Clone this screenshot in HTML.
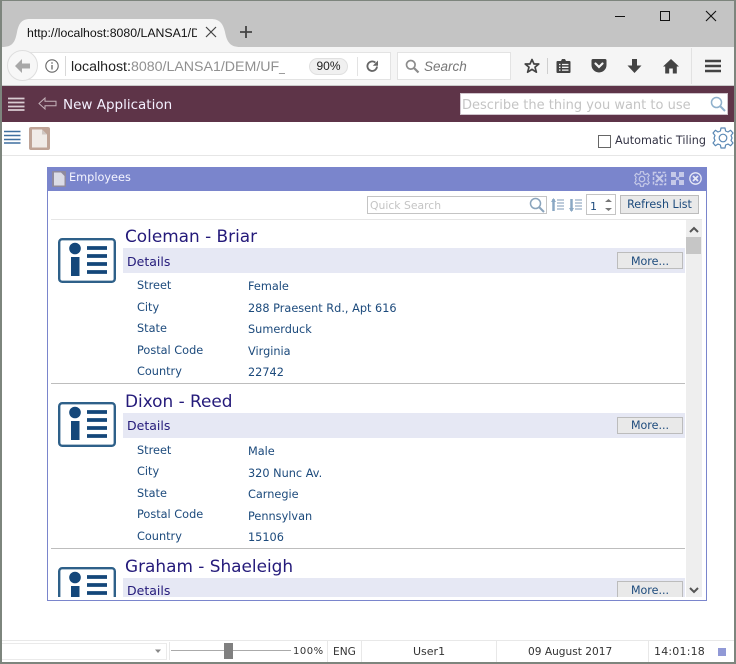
<!DOCTYPE html>
<html><head><meta charset="utf-8"><style>
html,body{margin:0;padding:0;background:#fff}
#p{position:relative;width:736px;height:664px;overflow:hidden;background:#fff;font-family:"DejaVu Sans",Verdana,sans-serif}
#p div,#p span.t{position:absolute;white-space:nowrap}
.t{position:absolute;white-space:nowrap;line-height:16px}
svg{position:absolute;overflow:visible}
.lb,.vl{font-size:11.300px;color:#1c4a7c;line-height:14px;margin-top:1px}
.btn{background:#e9e9e9;border:1px solid #bcbcbc;box-sizing:border-box;text-align:center;color:#1c4a7c;font-size:11.100px;line-height:18px}
.ti{font-size:16.900px;line-height:22px;color:#241a7a}
.de{font-size:12.500px;line-height:16px;color:#241a7a;margin-top:1px}
.st{font-size:10.600px;line-height:14px;color:#333;margin-top:1px}
</style></head><body><div id="p">

<!-- browser chrome -->
<div style="left:0;top:0;width:736px;height:47px;background:#c4c4c4"></div>
<svg style="left:0;top:19px" width="240" height="28"><path d="M2 28C12 28 15 24 17 13C19 3 23 0 30 0H211C219 0 223 4 225 13C227 24 231 28 240 28Z" fill="#f5f5f5"/></svg>
<div style="left:27px;top:24px;width:170px;height:18px;overflow:hidden;font:12.300px/18px 'Liberation Sans',sans-serif;color:#111">http://localhost:8080/LANSA1/DEM/UF_Exec</div>
<svg style="left:205px;top:26px" width="12" height="12"><path d="M1 1L11 11M11 1L1 11" stroke="#444" stroke-width="1.2"/></svg>
<svg style="left:240px;top:26px" width="12" height="12"><path d="M6 0V12M0 6H12" stroke="#444" stroke-width="1.8"/></svg>
<svg style="left:615px;top:10px" width="110" height="14"><path d="M0 6.5H10" stroke="#111" stroke-width="1"/><rect x="45.5" y="1.5" width="9" height="9" fill="none" stroke="#111" stroke-width="1"/><path d="M91 1L101 11M101 1L91 11" stroke="#111" stroke-width="1.1"/></svg>

<div style="left:0;top:47px;width:736px;height:38px;background:#f5f5f5"></div>
<div style="left:0;top:85px;width:736px;height:1px;background:#c9c9c9"></div>
<div style="left:22px;top:52px;width:369px;height:28px;background:#fff;border:1px solid #e3e3e3;box-sizing:border-box"></div>
<div style="left:7px;top:50px;width:31px;height:31px;border-radius:50%;background:#f7f7f7;border:1px solid #dedede;box-sizing:border-box"></div>
<svg style="left:14px;top:58px" width="17" height="16"><path d="M8 1L1 8L8 15V10.5H16V5.5H8Z" fill="#a8a8a8"/></svg>
<svg style="left:45px;top:59px" width="14" height="14"><circle cx="7" cy="7" r="6.2" fill="none" stroke="#666" stroke-width="1.1"/><path d="M7 6V10.5M7 3.2V4.8" stroke="#666" stroke-width="1.3"/></svg>
<div style="left:65px;top:56px;width:1px;height:20px;background:#d8d8d8"></div>
<div style="left:71px;top:58px;width:214px;height:18px;overflow:hidden;font:14.200px/18px 'Liberation Sans',sans-serif;color:#909090"><span style="color:#222">localhost:</span>8080/LANSA1/DEM/UF_Exec.jsp</div>
<div style="left:309px;top:58px;width:39px;height:17px;border-radius:9px;background:#f0f0f0;border:1px solid #e0e0e0;box-sizing:border-box;text-align:center;font:12px/15px 'Liberation Sans',sans-serif;color:#222">90%</div>
<div style="left:357px;top:57px;width:1px;height:19px;background:#e3e3e3"></div>
<svg style="left:366px;top:60px" width="13" height="13"><path d="M11 6.5A4.8 4.8 0 1 1 9.4 2.6" fill="none" stroke="#666" stroke-width="1.8"/><path d="M12 0.5V5.8H6.8Z" fill="#666"/></svg>
<div style="left:397px;top:52px;width:114px;height:28px;background:#fff;border:1px solid #e3e3e3;box-sizing:border-box"></div>
<svg style="left:405px;top:59px" width="15" height="15"><circle cx="5.8" cy="5.8" r="4.3" fill="none" stroke="#8c8c8c" stroke-width="1.7"/><path d="M9 9L13.5 13.5" stroke="#8c8c8c" stroke-width="2.2"/></svg>
<div style="left:424px;top:58px;font:italic 13.500px/18px 'Liberation Sans',sans-serif;color:#777">Search</div>
<svg style="left:524px;top:58px" width="16" height="16"><path d="M8 1.5L10 6H14.8L11 9.2L12.4 14.2L8 11.4L3.6 14.2L5 9.2L1.2 6H6Z" fill="none" stroke="#444" stroke-width="1.7" stroke-linejoin="round"/></svg>
<div style="left:547px;top:58px;width:1px;height:16px;background:#cfcfcf"></div>
<svg style="left:556px;top:58px" width="15" height="16"><path d="M1.5 3H5L6 1H9L10 3H13.5A1 1 0 0 1 14.5 4V14A1 1 0 0 1 13.500 15H1.500A1 1 0 0 1 .5 14V4A1 1 0 0 1 1.500 3Z" fill="#444"/><path d="M3 6.500H4.500M6 6.500H12.500M3 9.300H4.500M6 9.300H12.500M3 12.100H4.500M6 12.100H12.500" stroke="#f5f5f5" stroke-width="1.300"/></svg>
<svg style="left:591px;top:58px" width="16" height="15"><path d="M2 1H14A1.500 1.500 0 0 1 15.500 2.500V7A7.500 7.500 0 0 1 .5 7V2.500A1.500 1.500 0 0 1 2 1Z" fill="#444"/><path d="M4.500 5.500L8 9L11.500 5.500" fill="none" stroke="#f5f5f5" stroke-width="2.200" stroke-linecap="round"/></svg>
<svg style="left:627px;top:59px" width="15" height="15"><path d="M5 0H10V6.500H14.500L7.500 14L.5 6.500H5Z" fill="#444"/></svg>
<svg style="left:663px;top:59px" width="16" height="15"><path d="M8 0L16 7.500H13.800V14.500H9.800V9.500H6.200V14.500H2.200V7.500H0Z" fill="#444"/></svg>
<div style="left:691px;top:48px;width:1px;height:36px;background:#e2e2e2"></div>
<svg style="left:705px;top:59px" width="16" height="14"><path d="M0 2H16M0 7H16M0 12H16" stroke="#444" stroke-width="2.600"/></svg>

<!-- app header -->
<div style="left:0;top:86px;width:736px;height:36px;background:#5e3448"></div>
<svg style="left:8px;top:97px" width="17" height="14"><path d="M0 1.500H16.500M0 5.500H16.500M0 9.500H16.500M0 13H16.500" stroke="#d9ccd2" stroke-width="1.800"/></svg>
<svg style="left:38px;top:97px" width="19" height="14"><path d="M7 1L1 6.500L7 12V8.800H18V4.200H7Z" fill="none" stroke="#c5b3bb" stroke-width="1"/></svg>
<div style="left:63px;top:96px;font-size:13.500px;line-height:18px;color:#f4f0ff">New Application</div>
<div style="left:460px;top:93px;width:268px;height:22px;background:#fff;border:1px solid #cfc4cc;box-sizing:border-box"></div>
<div style="left:462px;top:97px;font-size:13px;line-height:17px;color:#c4c4c4">Describe the thing you want to use</div>
<svg style="left:710px;top:96px" width="17" height="16"><circle cx="6.500" cy="6.500" r="5" fill="none" stroke="#8fb0cc" stroke-width="1.500"/><path d="M10 10L15 15" stroke="#8fb0cc" stroke-width="2"/></svg>

<!-- secondary toolbar -->
<svg style="left:4px;top:130px" width="18" height="16"><path d="M0 1.500H16.500M0 5.500H16.500M0 9.500H16.500M0 13H16.500" stroke="#3f6f9f" stroke-width="1.600"/></svg>
<svg style="left:29px;top:127px" width="22" height="23"><rect x="0" y="0" width="21" height="23" rx="2" fill="#bfa497"/><path d="M3 2.500H13L18 7.500V20.500H3Z" fill="#f0ebe8"/><path d="M13 2.500V7.500H18Z" fill="#cfc6c2"/></svg>
<div style="left:1px;top:155px;width:734px;height:1px;background:#e6e6e6"></div>
<div style="left:598px;top:135px;width:11px;height:11px;border:1px solid #666;box-sizing:content-box"></div>
<div style="left:615px;top:133px;font-size:11.200px;line-height:16px;color:#334">Automatic Tiling</div>
<svg style="left:712px;top:127px" width="22" height="22" viewBox="0 0 22 22"><path d="M9 1H13L13.600 4L16 5L18.600 3.300L21 6L19 8.500L20 11L19 13.500L21 16L18.600 18.700L16 17L13.600 18L13 21H9L8.400 18L6 17L3.400 18.700L1 16L3 13.500L2 11L3 8.500L1 6L3.400 3.300L6 5L8.400 4Z" fill="none" stroke="#5a88b4" stroke-width="1.200" stroke-linejoin="round"/><circle cx="11" cy="11" r="3.800" fill="none" stroke="#5a88b4" stroke-width="1.200"/></svg>

<!-- panel -->
<div style="left:47px;top:167px;width:660px;height:434px;border:1px solid #7a85cc;box-sizing:border-box;background:#fff"></div>
<div style="left:47px;top:167px;width:660px;height:24px;background:#7a85cc"></div>
<svg style="left:52px;top:171px" width="14" height="16"><rect width="14" height="16" rx="1" fill="#8f8a9e"/><path d="M2 1.500H9L12.500 5V14.500H2Z" fill="#dcdce6"/></svg>
<div style="left:69px;top:170px;font-size:11.300px;line-height:16px;color:#f4f4ff">Employees</div>
<svg style="left:634px;top:171px" width="16" height="16" viewBox="0 0 22 22"><path d="M9 1H13L13.600 4L16 5L18.600 3.300L21 6L19 8.500L20 11L19 13.500L21 16L18.600 18.700L16 17L13.600 18L13 21H9L8.400 18L6 17L3.400 18.700L1 16L3 13.500L2 11L3 8.500L1 6L3.400 3.300L6 5L8.400 4Z" fill="none" stroke="#c5c9e8" stroke-width="1.600"/><circle cx="11" cy="11" r="3.800" fill="none" stroke="#c5c9e8" stroke-width="1.600"/></svg>
<svg style="left:653px;top:172px" width="13" height="13"><rect x=".5" y=".5" width="12" height="12" fill="none" stroke="#c5c9e8" stroke-width="1.500" stroke-dasharray="3 1.500"/><path d="M3 3L10 10M10 3L3 10" stroke="#c5c9e8" stroke-width="2"/></svg>
<svg style="left:671px;top:172px" width="13" height="13"><path d="M0 0H5V5H0ZM8 0H13V5H8ZM0 8H5V13H0ZM8 8H13V13H8Z" fill="#c5c9e8"/><path d="M5 5L8 8M8 5L5 8" stroke="#c5c9e8" stroke-width="1.500"/></svg>
<svg style="left:689px;top:172px" width="13" height="13"><circle cx="6.500" cy="6.500" r="5.700" fill="none" stroke="#e6e8f6" stroke-width="1.300"/><path d="M4 4L9 9M9 4L4 9" stroke="#e6e8f6" stroke-width="1.800"/></svg>

<!-- panel toolbar -->
<div style="left:367px;top:196px;width:180px;height:18px;border:1px solid #c4c4c4;box-sizing:border-box"></div>
<div style="left:370px;top:199px;font-size:10.800px;line-height:14px;color:#c4c4c4">Quick Search</div>
<svg style="left:529px;top:197px" width="16" height="16"><circle cx="6.500" cy="6.500" r="5" fill="none" stroke="#8aa4bc" stroke-width="1.500"/><path d="M10 10L15 15" stroke="#8aa4bc" stroke-width="2"/></svg>
<svg style="left:551px;top:198px" width="13" height="14"><path d="M2.500 1V13" stroke="#8aa8c4" stroke-width="2.500"/><path d="M0 4L2.500 0L5 4Z" fill="#8aa8c4"/><path d="M6 2H13M6 5H13M6 8H13M6 11H13" stroke="#a8bccf" stroke-width="1.600"/></svg>
<svg style="left:569px;top:198px" width="13" height="14"><path d="M2.500 1V13" stroke="#8aa8c4" stroke-width="2.500"/><path d="M0 10L2.500 14L5 10Z" fill="#8aa8c4"/><path d="M6 2H13M6 5H13M6 8H13M6 11H13" stroke="#a8bccf" stroke-width="1.600"/></svg>
<div style="left:586px;top:194px;width:30px;height:21px;border:1px solid #c4c4c4;box-sizing:border-box"></div>
<div style="left:590px;top:200px;font-size:11px;line-height:14px;color:#1c4a7c">1</div>
<svg style="left:604px;top:198px" width="9" height="14"><path d="M1 4L4.500 1L8 4ZM1 10L4.500 13L8 10Z" fill="#777"/></svg>
<div class="btn" style="left:620px;top:195px;width:79px;height:19px">Refresh List</div>
<div style="left:51px;top:219px;width:651px;height:1px;background:#e6e6e6"></div>

<!-- list -->
<div style="left:48px;top:220px;width:638px;height:377px;overflow:hidden">
  <!-- card 1 -->
  <svg style="left:10px;top:18px" width="58" height="45"><rect x="1.200" y="1.200" width="55.600" height="42.600" rx="3" fill="#fff" stroke="#2e6089" stroke-width="2.400"/><circle cx="17" cy="10.500" r="5.800" fill="#14477a"/><rect x="13" y="19" width="8.500" height="19" fill="#14477a"/><path d="M29 10H49M29 18H49M29 26H49M29 34H49" stroke="#14477a" stroke-width="3.800"/></svg>
  <div class="ti" style="left:77px;top:5px">Coleman - Briar</div>
  <div style="left:75px;top:28px;width:562px;height:25px;background:#e6e8f4"></div>
  <div class="de" style="left:79px;top:33px">Details</div>
  <div class="btn" style="left:569px;top:32px;width:66px;height:17px;line-height:17px">More...</div>
  <div class="lb" style="left:89px;top:58px">Street</div><div class="vl" style="left:200px;top:59px">Female</div>
  <div class="lb" style="left:89px;top:80px">City</div><div class="vl" style="left:200px;top:81px">288 Praesent Rd., Apt 616</div>
  <div class="lb" style="left:89px;top:101px">State</div><div class="vl" style="left:200px;top:102px">Sumerduck</div>
  <div class="lb" style="left:89px;top:123px">Postal Code</div><div class="vl" style="left:200px;top:124px">Virginia</div>
  <div class="lb" style="left:89px;top:144px">Country</div><div class="vl" style="left:200px;top:145px">22742</div>
  <div style="left:3px;top:163px;width:634px;height:1px;background:#bdbdbd"></div>
  <!-- card 2 -->
  <svg style="left:10px;top:182px" width="58" height="45"><rect x="1.200" y="1.200" width="55.600" height="42.600" rx="3" fill="#fff" stroke="#2e6089" stroke-width="2.400"/><circle cx="17" cy="10.500" r="5.800" fill="#14477a"/><rect x="13" y="19" width="8.500" height="19" fill="#14477a"/><path d="M29 10H49M29 18H49M29 26H49M29 34H49" stroke="#14477a" stroke-width="3.800"/></svg>
  <div class="ti" style="left:77px;top:170px">Dixon - Reed</div>
  <div style="left:75px;top:193px;width:562px;height:25px;background:#e6e8f4"></div>
  <div class="de" style="left:79px;top:197px">Details</div>
  <div class="btn" style="left:569px;top:197px;width:66px;height:17px;line-height:16px">More...</div>
  <div class="lb" style="left:89px;top:223px">Street</div><div class="vl" style="left:200px;top:224px">Male</div>
  <div class="lb" style="left:89px;top:244px">City</div><div class="vl" style="left:200px;top:246px">320 Nunc Av.</div>
  <div class="lb" style="left:89px;top:266px">State</div><div class="vl" style="left:200px;top:267px">Carnegie</div>
  <div class="lb" style="left:89px;top:287px">Postal Code</div><div class="vl" style="left:200px;top:289px">Pennsylvan</div>
  <div class="lb" style="left:89px;top:309px">Country</div><div class="vl" style="left:200px;top:310px">15106</div>
  <div style="left:3px;top:328px;width:634px;height:1px;background:#bdbdbd"></div>
  <!-- card 3 -->
  <svg style="left:10px;top:347px" width="58" height="45"><rect x="1.200" y="1.200" width="55.600" height="42.600" rx="3" fill="#fff" stroke="#2e6089" stroke-width="2.400"/><circle cx="17" cy="10.500" r="5.800" fill="#14477a"/><rect x="13" y="19" width="8.500" height="19" fill="#14477a"/><path d="M29 10H49M29 18H49M29 26H49M29 34H49" stroke="#14477a" stroke-width="3.800"/></svg>
  <div class="ti" style="left:77px;top:335px">Graham - Shaeleigh</div>
  <div style="left:75px;top:358px;width:562px;height:25px;background:#e6e8f4"></div>
  <div class="de" style="left:79px;top:362px">Details</div>
  <div class="btn" style="left:569px;top:361px;width:66px;height:17px;line-height:17px">More...</div>
</div>

<!-- scrollbar -->
<div style="left:686px;top:220px;width:16px;height:377px;background:#eeeeee"></div>
<div style="left:686px;top:237px;width:15px;height:17px;background:#c6c6c6"></div>
<svg style="left:689px;top:226px" width="10" height="8"><path d="M1 6L5 2L9 6" fill="none" stroke="#555" stroke-width="2"/></svg>
<svg style="left:689px;top:586px" width="10" height="8"><path d="M1 2L5 6L9 2" fill="none" stroke="#555" stroke-width="2"/></svg>

<!-- status bar -->
<div style="left:1px;top:640px;width:734px;height:1px;background:#e8e8e8"></div>
<div style="left:2px;top:643px;width:165px;height:17px;border:1px solid #eaeaea;box-sizing:border-box;border-left:0"></div>
<svg style="left:155px;top:649px" width="7" height="5"><path d="M0 .5H6L3 4Z" fill="#888"/></svg>
<div style="left:169px;top:642px;width:1px;height:18px;background:#e8e8e8"></div>
<div style="left:171px;top:650px;width:120px;height:1px;background:#aaa"></div>
<div style="left:224px;top:643px;width:9px;height:16px;background:#808080"></div>
<div class="st" style="left:293px;top:644px;font-size:10px;letter-spacing:.5px">100%</div>
<div style="left:327px;top:641px;width:1px;height:22px;background:#e8e8e8"></div>
<div class="st" style="left:333px;top:644px">ENG</div>
<div style="left:361px;top:641px;width:1px;height:22px;background:#e8e8e8"></div>
<div class="st" style="left:413px;top:644px;font-size:11px">User1</div>
<div style="left:496px;top:641px;width:1px;height:22px;background:#e8e8e8"></div>
<div class="st" style="left:528px;top:644px">09 August 2017</div>
<div style="left:648px;top:641px;width:1px;height:22px;background:#e8e8e8"></div>
<div class="st" style="left:654px;top:644px;font-size:11px;letter-spacing:.2px">14:01:18</div>
<div style="left:718px;top:648px;width:8px;height:8px;background:#9199d6"></div>

<!-- window border -->
<div style="left:0;top:0;width:736px;height:664px;border:2px solid #7d857d;border-width:1px 2px 2px 2px;box-sizing:border-box"></div>
</div></body></html>
